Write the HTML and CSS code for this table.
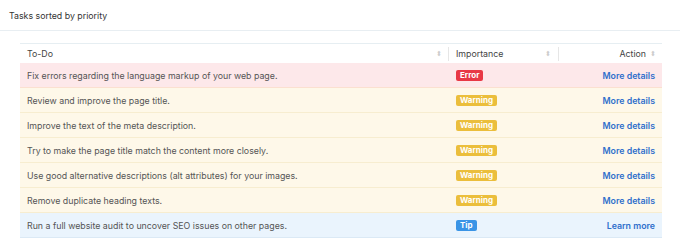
FILE: index.html
```html
<!DOCTYPE html>
<html>
<head>
<meta charset="utf-8">
<link rel="stylesheet" href="styles.css">
</head>
<body>
<div class="panel">
  <div class="panel-head">Tasks sorted by priority</div>
  <div class="panel-body">
    <table class="tasks">
      <thead>
        <tr>
          <th class="c-todo"><span class="th-in">To-Do<span class="sort">⬍</span></span></th>
          <th class="c-imp"><span class="th-in">Importance<span class="sort">⬍</span></span></th>
          <th class="c-act"><span class="th-in th-right">Action<span class="sort">⬍</span></span></th>
        </tr>
      </thead>
      <tbody>
        <tr class="r-error"><td>Fix errors regarding the language markup of your web page.</td><td><span class="badge b-error">Error</span></td><td class="act"><a>More details</a></td></tr>
        <tr class="r-warn"><td>Review and improve the page title.</td><td><span class="badge b-warn">Warning</span></td><td class="act"><a>More details</a></td></tr>
        <tr class="r-warn"><td>Improve the text of the meta description.</td><td><span class="badge b-warn">Warning</span></td><td class="act"><a>More details</a></td></tr>
        <tr class="r-warn"><td>Try to make the page title match the content more closely.</td><td><span class="badge b-warn">Warning</span></td><td class="act"><a>More details</a></td></tr>
        <tr class="r-warn"><td>Use good alternative descriptions (alt attributes) for your images.</td><td><span class="badge b-warn">Warning</span></td><td class="act"><a>More details</a></td></tr>
        <tr class="r-warn"><td>Remove duplicate heading texts.</td><td><span class="badge b-warn">Warning</span></td><td class="act"><a>More details</a></td></tr>
        <tr class="r-tip"><td>Run a full website audit to uncover SEO issues on other pages.</td><td><span class="badge b-tip">Tip</span></td><td class="act"><a>Learn more</a></td></tr>
      </tbody>
    </table>
  </div>
</div>
</body>
</html>
```
FILE: styles.css
```css
html, body { margin: 0; padding: 0; background: #fff; }
body { font-family: Inter, "Noto Sans", sans-serif; color: #555; width: 680px; height: 247px; overflow: hidden; }
.panel-head { height: 30px; padding: 0 9px; display: flex; align-items: center; font-size: 8.8px; color: #333; border-bottom: 1px solid #e8eef2; }
.panel-body { padding: 12px 18px 0 20px; }
.tasks { width: 642px; border-collapse: collapse; table-layout: fixed; font-size: 8.8px; }
.tasks th { height: 19px; font-weight: 400; color: #444; text-align: left; padding: 0; border-top: 1px solid #e6eef2; }
.c-todo { width: 429px; }
.c-imp { width: 110px; }
.th-in { display: flex; align-items: center; justify-content: space-between; padding: 0 7px; border-right: 1px solid #e6e6e6; height: 14px; }
.c-act .th-in { border-right: none; justify-content: flex-end; gap: 4px; padding-right: 6px; }
.c-todo .th-in { padding-right: 6px; }
.sort { font-size: 7px; color: #ccc; }
.tasks td { height: 24px; padding: 0 7px; border-bottom: 1px solid #f7edd0; }
.r-error td { background: #fde8ea; border-bottom-color: #fbe0d0; }
.r-warn td { background: #fef8e9; }
.r-tip td { background: #eaf4fd; border-bottom-color: #dbe9f5; }
.act { text-align: right; }
.act a { color: #3070cc; font-weight: 600; }
.tasks td.act { padding-right: 7px; }
.badge { display: inline-block; color: #fff; font-weight: 700; font-size: 8px; line-height: 11px; padding: 0 4px; border-radius: 2px; }
.b-error { background: #e83845; }
.b-warn { background: #ebbe3c; }
.b-tip { background: #3a94e6; }
```
